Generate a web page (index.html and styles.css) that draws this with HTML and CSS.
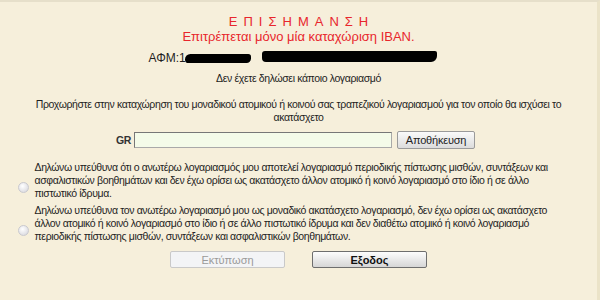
FILE: index.html
```html
<!DOCTYPE html>
<html>
<head>
    <meta charset="UTF-8">
    <title>Ακατάσχετος λογαριασμός</title>
    <link rel="stylesheet" href="styles.css">
</head>
<body>
<div class="page">
    <div class="notice">
        <div class="notice-title">ΕΠΙΣΗΜΑΝΣΗ</div>
        <div class="notice-text">Επιτρέπεται μόνο μία καταχώριση ΙΒΑΝ.</div>
    </div>

    <div class="afm">
        <span class="afm-label">ΑΦΜ:1</span><em class="mask mask-a"></em><em class="mask mask-b"></em>
    </div>

    <p class="info">Δεν έχετε δηλώσει κάποιο λογαριασμό</p>

    <p class="lead">Προχωρήστε στην καταχώρηση του μοναδικού ατομικού ή κοινού σας τραπεζικού λογαριασμού για τον οποίο θα ισχύσει το ακατάσχετο</p>

    <div class="iban">
        <label class="iban-label" for="iban">GR</label>
        <input class="iban-input" id="iban" type="text">
        <button class="btn-save" type="button">Αποθήκευση</button>
    </div>

    <ul class="choices">
        <li>
            <input class="radio" type="radio" name="decl">
            <span>Δηλώνω υπεύθυνα ότι ο ανωτέρω λογαριασμός μου αποτελεί λογαριασμό περιοδικής πίστωσης μισθών, συντάξεων και ασφαλιστικών βοηθημάτων και δεν έχω ορίσει ως ακατάσχετο άλλον ατομικό ή κοινό λογαριασμό στο ίδιο ή σε άλλο πιστωτικό ίδρυμα.</span>
        </li>
        <li>
            <input class="radio" type="radio" name="decl">
            <span>Δηλώνω υπεύθυνα τον ανωτέρω λογαριασμό μου ως μοναδικό ακατάσχετο λογαριασμό, δεν έχω ορίσει ως ακατάσχετο άλλον ατομικό ή κοινό λογαριασμό στο ίδιο ή σε άλλο πιστωτικό ίδρυμα και δεν διαθέτω ατομικό ή κοινό λογαριασμό περιοδικής πίστωσης μισθών, συντάξεων και ασφαλιστικών βοηθημάτων.</span>
        </li>
    </ul>

    <div class="actions">
        <button class="btn btn-print" type="button" disabled>Εκτύπωση</button>
        <button class="btn btn-exit" type="button">Εξοδος</button>
    </div>
</div>
</body>
</html>
```

FILE: styles.css
```css
html, body {
    margin: 0;
    padding: 0;
    height: 100%;
}

body {
    background: #f6efdb;
    font-family: "Liberation Sans", Arial, sans-serif;
    font-size: 10.5px;
    letter-spacing: -0.38px;
    color: #1e1e1e;
    border-top: 2px solid #e6dfca;
    border-right: 3px solid #ebe3c8;
    box-sizing: border-box;
}

p {
    margin: 0;
}

.page {
    width: 536px;
    margin: 0 auto;
    padding-top: 12px;
    text-align: center;
}

.notice {
    color: #e8262c;
    font-size: 13px;
    line-height: 15px;
    letter-spacing: 0;
}

.notice-title {
    letter-spacing: 6px;
    padding-left: 6px;
}

.afm {
    display: flex;
    align-items: center;
    height: 18px;
    margin-top: 5px;
    padding-left: 118px;
    text-align: left;
    font-size: 12px;
    letter-spacing: 0;
}

.mask {
    display: block;
    background: #000;
    border-radius: 6px 3px 5px 4px;
}

.mask-a {
    width: 66px;
    height: 9px;
    margin-left: -1px;
}

.mask-b {
    width: 175px;
    height: 11px;
    margin-left: 11px;
    margin-top: -3px;
    border-radius: 3px 2px 6px 4px;
}

.info {
    margin-top: 4px;
    line-height: 14px;
}

.lead {
    margin-top: 13px;
    line-height: 13px;
}

.iban {
    display: flex;
    align-items: center;
    justify-content: center;
    gap: 3px;
    margin-top: 7px;
    padding-right: 6px;
}

.iban-label {
    font-weight: bold;
    color: #333;
}

.iban-input {
    width: 252px;
    height: 14px;
    padding: 0 2px;
    margin: 0;
    border: 1px solid #a9a9a9;
    border-top-color: #777;
    border-left-color: #777;
    background: #f4fbe9;
}

.btn-save {
    margin-left: 2px;
    height: 18px;
    width: 78px;
    padding: 0;
    font: 11px "Liberation Sans", Arial, sans-serif;
    letter-spacing: -0.2px;
    color: #222;
    border: 1px solid #9a9a9a;
    border-radius: 2px;
    background: linear-gradient(#fafafa, #dcdcdc);
}

.choices {
    list-style: none;
    margin: 12px 0 0 -13px;
    padding: 0;
    text-align: left;
}

.choices li {
    display: flex;
    align-items: flex-end;
    margin-bottom: 4px;
    line-height: 13px;
}

.radio {
    -webkit-appearance: none;
    appearance: none;
    flex: none;
    width: 11px;
    height: 11px;
    margin: 0 6px 7px 0;
    border: 1px solid #c9c9cf;
    border-radius: 50%;
    background: radial-gradient(circle at 40% 35%, #fff, #d3d3da);
}

.actions {
    display: flex;
    justify-content: center;
    gap: 27px;
    margin-top: 8px;
}

.btn {
    width: 115px;
    height: 17px;
    padding: 0;
    font: 11px "Liberation Sans", Arial, sans-serif;
    border-radius: 2px;
}

.btn-print {
    color: #9a9a9a;
    border: 1px solid #c9c9c9;
    background: #f3f4f6;
}

.btn-exit {
    font-weight: bold;
    color: #111;
    border: 1px solid #6e6e6e;
    background: linear-gradient(#fdfdfd, #d6d6d6);
}
```
